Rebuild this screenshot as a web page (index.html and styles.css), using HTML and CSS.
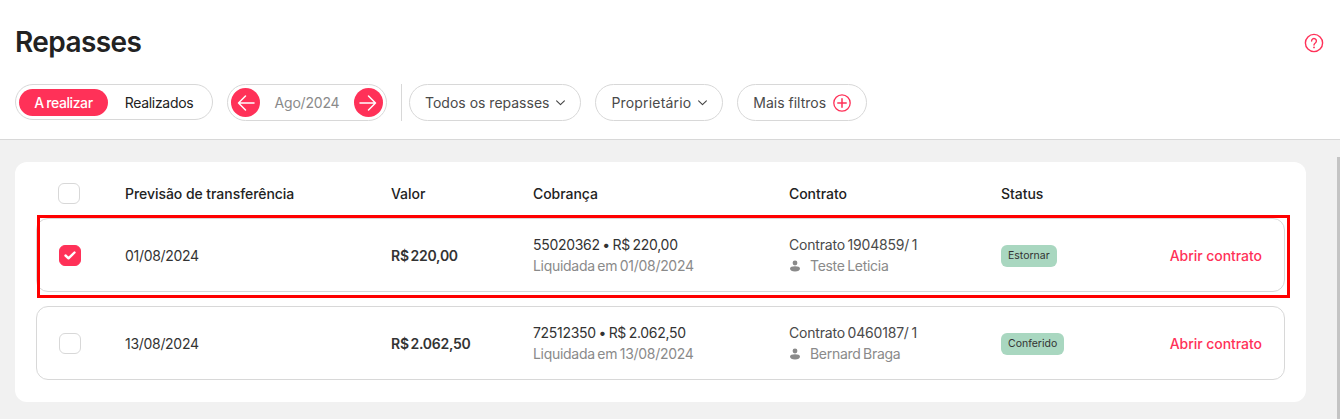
FILE: index.html
```html
<!DOCTYPE html>
<html lang="pt-BR">
<head>
<meta charset="utf-8">
<title>Repasses</title>
<link rel="stylesheet" href="styles.css">
</head>
<body>
<header class="top">
  <div class="title-row">
    <h1 class="title">Repasses</h1>
    <svg class="help" width="20" height="20" viewBox="0 0 20 20" fill="none"><circle cx="10" cy="10" r="8.600" stroke="#ff3158" stroke-width="1.400"/><path d="M7.600 8a2.400 2.400 0 1 1 3.700 2c-.9.6-1.300 1-1.300 2" stroke="#ff3158" stroke-width="1.400" stroke-linecap="round"/><circle cx="10" cy="14.400" r=".9" fill="#ff3158"/></svg>
  </div>
  <div class="filters">
    <div class="pill segmented">
      <span class="seg seg-active">A realizar</span>
      <span class="seg">Realizados</span>
    </div>
    <div class="pill month">
      <span class="round-btn"><svg width="20" height="20" viewBox="0 0 20 20" fill="none"><path d="M18 10H2.500M9.500 3 2.500 10l7 7" stroke="#fff" stroke-width="1.500" stroke-linecap="round" stroke-linejoin="round"/></svg></span>
      <span class="month-label">Ago/2024</span>
      <span class="round-btn"><svg width="20" height="20" viewBox="0 0 20 20" fill="none"><path d="M2 10h15.500M10.500 3l7 7-7 7" stroke="#fff" stroke-width="1.500" stroke-linecap="round" stroke-linejoin="round"/></svg></span>
    </div>
    <span class="divider"></span>
    <div class="pill filter">Todos os repasses <svg class="chev" width="9" height="6" viewBox="0 0 9 6" fill="none"><path d="M.6.8 4.500 4.700 8.400.8" stroke="#444" stroke-width="1.100" stroke-linecap="round" stroke-linejoin="round"/></svg></div>
    <div class="pill filter filter-wide">Proprietário <svg class="chev" width="9" height="6" viewBox="0 0 9 6" fill="none"><path d="M.6.8 4.500 4.700 8.400.8" stroke="#444" stroke-width="1.100" stroke-linecap="round" stroke-linejoin="round"/></svg></div>
    <div class="pill filter">Mais filtros <svg class="plus" width="18" height="18" viewBox="0 0 18 18" fill="none"><circle cx="9" cy="9" r="8.200" stroke="#ff3158" stroke-width="1.300"/><path d="M9 4.800v8.400M4.800 9h8.400" stroke="#ff3158" stroke-width="1.500" stroke-linecap="round"/></svg></div>
  </div>
</header>
<main class="content">
  <section class="card">
    <div class="table-head">
      <span class="check"></span>
      <span>Previsão de transferência</span>
      <span>Valor</span>
      <span>Cobrança</span>
      <span>Contrato</span>
      <span>Status</span>
    </div>
    <div class="rows">
      <article class="row">
        <span class="check checked"><svg width="12" height="9" viewBox="0 0 12 9" fill="none"><path d="M1.500 4.500 4.500 7.300 10.500 1.500" stroke="#fff" stroke-width="2.400" stroke-linecap="round" stroke-linejoin="round"/></svg></span>
        <span class="date">01/08/2024</span>
        <strong class="value">R$ 220,00</strong>
        <div class="stack">
          <span class="primary">55020362 • R$ 220,00</span>
          <span class="muted">Liquidada em 01/08/2024</span>
        </div>
        <div class="stack">
          <span class="contract">Contrato 1904859/ 1</span>
          <span class="muted person"><svg width="12" height="12" viewBox="0 0 12 12"><circle cx="6" cy="3" r="2.400" fill="#8a8a8a"/><path d="M1 8.500C1 7 3 6.300 6 6.300S11 7 11 8.500c0 2-2 3-5 3s-5-1-5-3z" fill="#8a8a8a"/></svg>Teste Leticia</span>
        </div>
        <div class="status"><span class="badge">Estornar</span></div>
        <a class="action">Abrir contrato</a>
      </article>
      <article class="row">
        <span class="check"></span>
        <span class="date">13/08/2024</span>
        <strong class="value">R$ 2.062,50</strong>
        <div class="stack">
          <span class="primary">72512350 • R$ 2.062,50</span>
          <span class="muted">Liquidada em 13/08/2024</span>
        </div>
        <div class="stack">
          <span class="contract">Contrato 0460187/ 1</span>
          <span class="muted person"><svg width="12" height="12" viewBox="0 0 12 12"><circle cx="6" cy="3" r="2.400" fill="#8a8a8a"/><path d="M1 8.500C1 7 3 6.300 6 6.300S11 7 11 8.500c0 2-2 3-5 3s-5-1-5-3z" fill="#8a8a8a"/></svg>Bernard Braga</span>
        </div>
        <div class="status"><span class="badge">Conferido</span></div>
        <a class="action">Abrir contrato</a>
      </article>
    </div>
    <div class="highlight"></div>
  </section>
</main>
<div class="scrollbar"></div>
</body>
</html>
```
FILE: styles.css
```css
* { box-sizing: border-box; }
html, body { margin: 0; height: 100%; overflow: hidden; }
body {
  font-family: Inter, "Noto Sans", sans-serif;
  font-size: 14px;
  color: #222;
  background: #f1f1f1;
  position: relative;
}
.top {
  height: 140px;
  background: #fff;
  border-bottom: 1px solid #d8d8d8;
  padding: 0 16px 0 15px;
}
.title-row {
  height: 84px;
  display: flex;
  align-items: center;
  justify-content: space-between;
}
.title {
  margin: 0;
  font-size: 28px;
  font-weight: 600;
  letter-spacing: -0.6px;
  color: #222;
  line-height: 36px;
}
.help { margin-top: 2px; }
.filters { display: flex; align-items: flex-start; }
.pill {
  height: 37px;
  border: 1px solid #d8d8d8;
  border-radius: 19px;
  display: flex;
  align-items: center;
  background: #fff;
}
.segmented { width: 198px; padding-left: 3px; margin-right: 14px; height: 36px; letter-spacing: -0.3px; }
.seg { flex: none; text-align: center; width: 89px; height: 27px; line-height: 27px; border-radius: 14px; }
.seg + .seg { width: 102px; }
.seg-active { background: #ff3158; color: #fff; font-weight: 500; letter-spacing: -0.4px; word-spacing: -1px; }
.month { width: 160px; padding: 0 3px; justify-content: space-between; margin-right: 14px; }
.round-btn {
  width: 29px;
  height: 29px;
  border-radius: 50%;
  background: #ff3158;
  display: flex;
  align-items: center;
  justify-content: center;
}
.month-label { color: #8a8a8a; letter-spacing: -0.2px; }
.divider { width: 1px; height: 37px; background: #d8d8d8; margin-right: 7px; }
.filter { padding: 0 15px; margin-right: 14px; gap: 7px; color: #4a4a4a; white-space: nowrap; }
.filter-wide { letter-spacing: 0.17px; }
.chev { flex: none; }
.plus { flex: none; }
.content { padding: 22px 34px 0 15px; }
.card {
  position: relative;
  background: #fff;
  border-radius: 12px;
  padding: 0 21px 22px;
  height: 240px;
}
.table-head {
  height: 56px;
  padding: 7px 0 0 22px;
  display: grid;
  grid-template-columns: 67px 266px 142px 256px 212px 1fr;
  align-items: center;
  font-weight: 500;
  color: #222;
  letter-spacing: -0.05px;
}
.rows { display: flex; flex-direction: column; gap: 14px; }
.row {
  height: 74px;
  border: 1px solid #d8d8d8;
  border-radius: 12px;
  padding: 0 22px;
  display: grid;
  grid-template-columns: 66px 266px 142px 256px 212px 1fr auto;
  align-items: center;
}
.check {
  width: 22px;
  height: 21px;
  border: 1px solid #d8d8d8;
  border-radius: 6px;
  display: flex;
  align-items: center;
  justify-content: center;
  background: #fff;
}
.check.checked { background: #ff3158; border-color: #ff3158; }
.date { color: #333; letter-spacing: -0.3px; }
.value { font-weight: 600; color: #333; letter-spacing: -0.25px; word-spacing: -1.5px; }
.stack { display: flex; flex-direction: column; gap: 2px; line-height: 19px; }
.primary { color: #333; letter-spacing: -0.3px; word-spacing: -1px; }
.contract { color: #4a4a4a; letter-spacing: -0.2px; word-spacing: -1px; }
.muted { color: #8a8a8a; letter-spacing: -0.3px; word-spacing: -1px; }
.person { display: flex; align-items: center; gap: 9px; }
.status { display: flex; padding-top: 2px; }
.badge {
  height: 22px;
  line-height: 22px;
  padding: 0 7px;
  border-radius: 6px;
  background: #a9d7c0;
  font-size: 10.5px;
  color: #333;
}
.action { color: #ff3158; font-weight: 500; letter-spacing: -0.05px; }
.highlight {
  position: absolute;
  left: 22px;
  top: 53px;
  width: 1253px;
  height: 83px;
  border: 3px solid #f00;
}
.scrollbar {
  position: absolute;
  right: 0;
  top: 157px;
  bottom: 0;
  width: 3px;
  background: #c4c4c4;
}
```
